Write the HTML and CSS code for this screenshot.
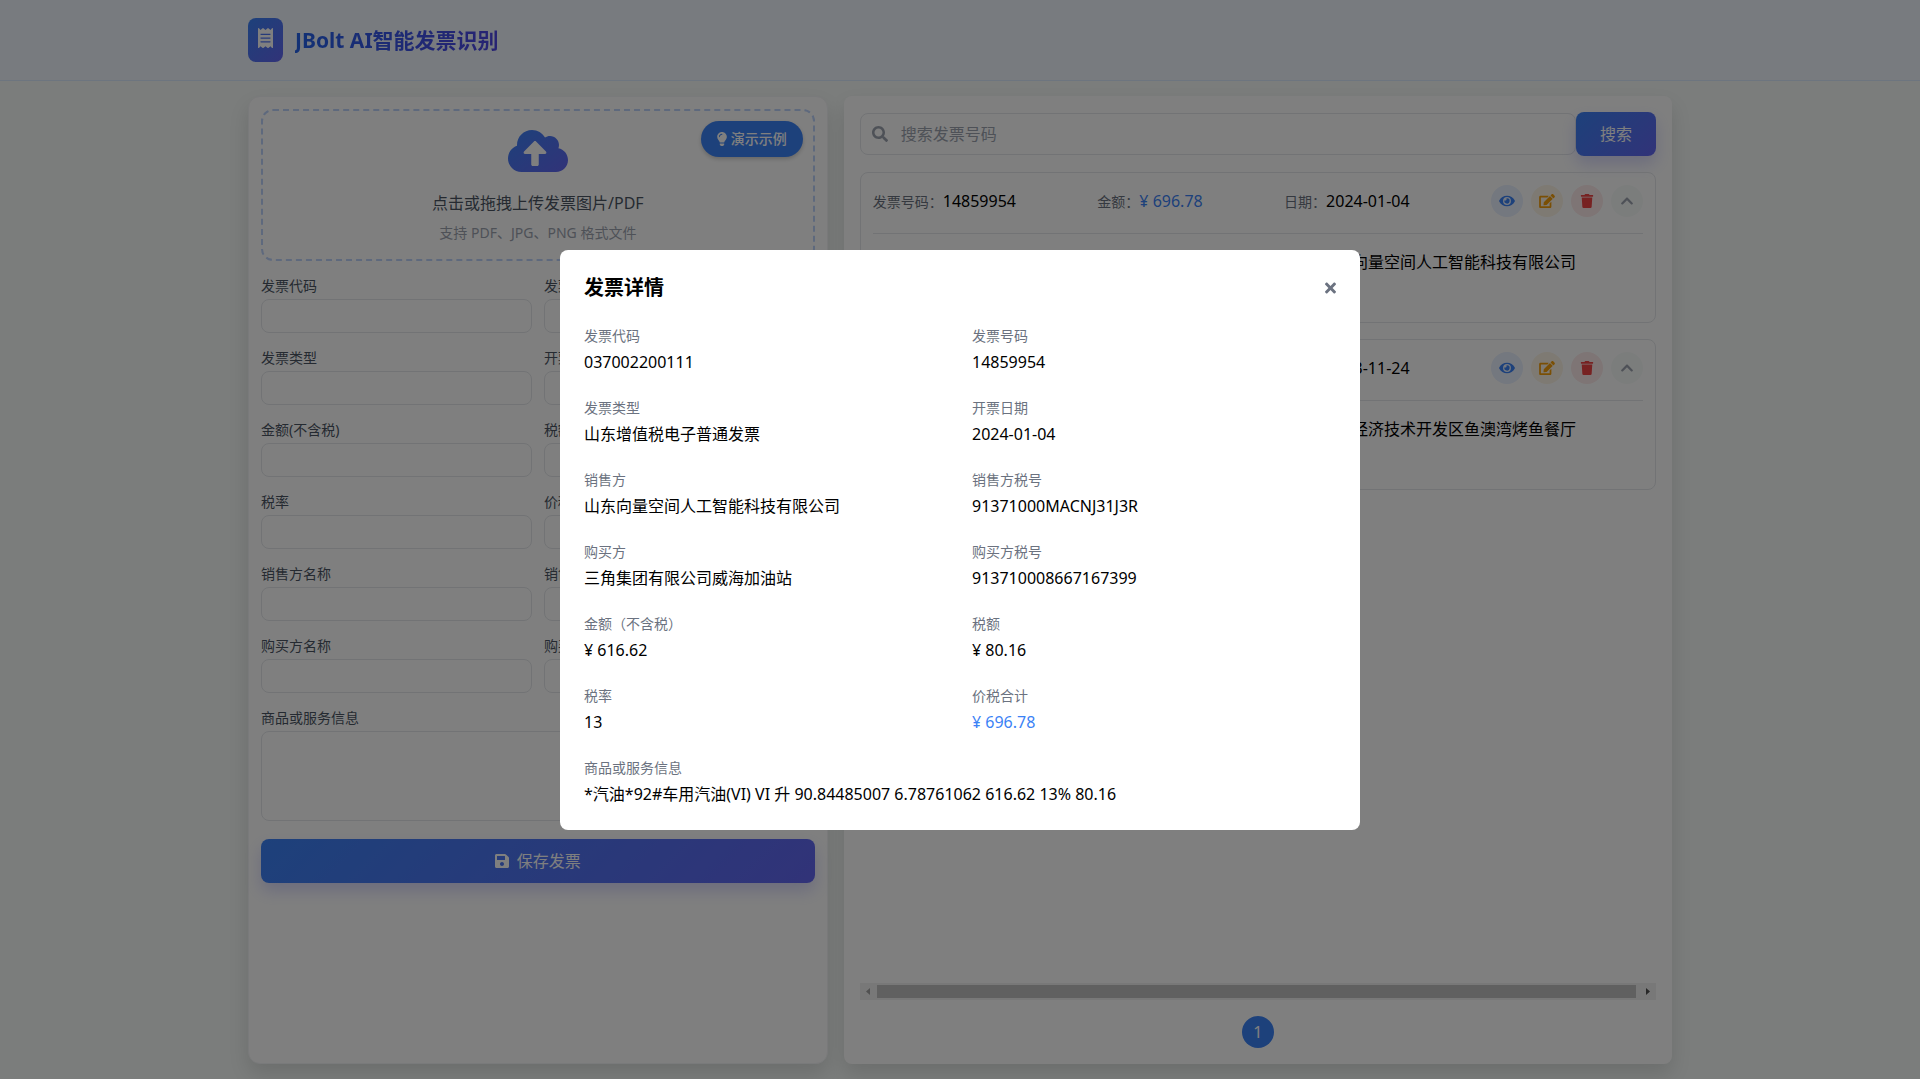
FILE: index.html
```html
<!DOCTYPE html>
<html lang="zh-CN">
<head>
<meta charset="utf-8">
<meta name="viewport" content="width=device-width, initial-scale=1">
<title>JBolt AI智能发票识别</title>
<link rel="stylesheet" href="styles.css">
</head>
<body>
<svg class="sprite" aria-hidden="true">
  <defs>
    <linearGradient id="brand" x1="0" y1="0" x2="1" y2="1"><stop offset="0" stop-color="#3b82f6"/><stop offset="1" stop-color="#6366f1"/></linearGradient>
  </defs>
  <symbol id="i-receipt" viewBox="0 0 384 512"><path d="M358.4 3.2L320 48 265.6 3.2a15.9 15.9 0 0 0-19.2 0L192 48 137.6 3.2a15.9 15.9 0 0 0-19.2 0L64 48 25.6 3.2C15-4.7 0 2.8 0 16v480c0 13.2 15 20.7 25.6 12.8L64 464l54.4 44.8a15.9 15.9 0 0 0 19.2 0L192 464l54.4 44.8a15.9 15.9 0 0 0 19.2 0L320 464l38.4 44.8c10.5 7.9 25.6.4 25.6-12.8V16c0-13.2-15-20.7-25.6-12.8zM320 360c0 4.4-3.6 8-8 8H72c-4.4 0-8-3.6-8-8v-16c0-4.4 3.6-8 8-8h240c4.4 0 8 3.6 8 8v16zm0-96c0 4.4-3.6 8-8 8H72c-4.4 0-8-3.6-8-8v-16c0-4.4 3.6-8 8-8h240c4.4 0 8 3.6 8 8v16zm0-96c0 4.4-3.6 8-8 8H72c-4.4 0-8-3.6-8-8v-16c0-4.4 3.6-8 8-8h240c4.4 0 8 3.6 8 8v16z"/></symbol>
  <symbol id="i-bulb" viewBox="0 0 352 512"><path d="M96.06 454.35c.01 6.29 1.87 12.45 5.36 17.69l17.09 25.69a31.99 31.99 0 0 0 26.64 14.28h61.71a31.99 31.99 0 0 0 26.64-14.28l17.09-25.69a31.989 31.989 0 0 0 5.36-17.69l.04-38.35H96.01l.05 38.35zM0 176c0 44.37 16.45 84.85 43.56 115.78 16.52 18.85 42.36 58.23 52.21 91.45.04.26.07.52.11.78h160.24c.04-.26.07-.51.11-.78 9.85-33.22 35.69-72.6 52.21-91.45C335.55 260.85 352 220.37 352 176 352 78.61 272.91-.3 175.45 0 73.44.31 0 82.97 0 176zm176-80c-44.11 0-80 35.89-80 80 0 8.84-7.16 16-16 16s-16-7.16-16-16c0-61.76 50.24-112 112-112 8.84 0 16 7.16 16 16s-7.16 16-16 16z"/></symbol>
  <symbol id="i-search" viewBox="0 0 512 512"><path d="M505 442.7L405.3 343c-4.5-4.5-10.6-7-17-7H372c27.6-35.3 44-79.7 44-128C416 93.1 322.9 0 208 0S0 93.1 0 208s93.1 208 208 208c48.3 0 92.7-16.4 128-44v16.3c0 6.4 2.5 12.5 7 17l99.7 99.7c9.4 9.4 24.6 9.4 33.9 0l28.3-28.3c9.4-9.4 9.4-24.6.1-34zM208 336c-70.7 0-128-57.2-128-128 0-70.7 57.2-128 128-128 70.7 0 128 57.2 128 128 0 70.7-57.2 128-128 128z"/></symbol>
  <symbol id="i-eye" viewBox="0 0 576 512"><path d="M572.52 241.4C518.29 135.59 410.93 64 288 64S57.68 135.64 3.48 241.41a32.35 32.35 0 0 0 0 29.19C57.71 376.41 165.07 448 288 448s230.32-71.64 284.52-177.41a32.35 32.35 0 0 0 0-29.19zM288 400a144 144 0 1 1 144-144 143.93 143.93 0 0 1-144 144zm0-240a95.31 95.31 0 0 0-25.31 3.79 47.85 47.85 0 0 1-66.9 66.9A95.78 95.78 0 1 0 288 160z"/></symbol>
  <symbol id="i-edit" viewBox="0 0 576 512"><path d="M402.6 83.2l90.2 90.2c3.8 3.8 3.8 10 0 13.8L274.4 405.6l-92.8 10.3c-12.4 1.4-22.9-9.1-21.5-21.5l10.3-92.8L388.8 83.2c3.8-3.8 10-3.8 13.8 0zm162-22.9l-48.8-48.8c-15.2-15.2-39.9-15.2-55.2 0l-35.4 35.4c-3.8 3.8-3.8 10 0 13.8l90.2 90.2c3.8 3.8 10 3.8 13.8 0l35.4-35.4c15.2-15.3 15.2-40 0-55.2zM384 346.2V448H64V128h229.8c3.2 0 6.2-1.3 8.5-3.5l40-40c7.6-7.6 2.2-20.5-8.5-20.5H48C21.5 64 0 85.5 0 112v352c0 26.5 21.5 48 48 48h352c26.5 0 48-21.5 48-48V306.2c0-10.7-12.9-16-20.5-8.5l-40 40c-2.2 2.3-3.5 5.3-3.5 8.5z"/></symbol>
  <symbol id="i-trash" viewBox="0 0 448 512"><path d="M432 32H312l-9.4-18.7A24 24 0 0 0 281.1 0H166.8a23.72 23.72 0 0 0-21.4 13.3L136 32H16A16 16 0 0 0 0 48v32a16 16 0 0 0 16 16h416a16 16 0 0 0 16-16V48a16 16 0 0 0-16-16zM53.2 467a48 48 0 0 0 47.9 45h245.8a48 48 0 0 0 47.9-45L416 128H32z"/></symbol>
  <symbol id="i-up" viewBox="0 0 448 512"><path d="M240.971 130.524l194.343 194.343c9.373 9.373 9.373 24.569 0 33.941l-22.667 22.667c-9.357 9.357-24.522 9.375-33.901.04L224 227.495 69.255 381.516c-9.379 9.335-24.544 9.317-33.901-.04l-22.667-22.667c-9.373-9.373-9.373-24.569 0-33.941L207.03 130.525c9.372-9.373 24.568-9.373 33.941-.001z"/></symbol>
  <symbol id="i-save" viewBox="0 0 448 512"><path d="M433.941 129.941l-83.882-83.882A48 48 0 0 0 316.118 32H48C21.49 32 0 53.49 0 80v352c0 26.51 21.49 48 48 48h352c26.51 0 48-21.49 48-48V163.882a48 48 0 0 0-14.059-33.941zM224 416c-35.346 0-64-28.654-64-64 0-35.346 28.654-64 64-64s64 28.654 64 64c0 35.346-28.654 64-64 64zm96-304.52V212c0 6.627-5.373 12-12 12H76c-6.627 0-12-5.373-12-12V108c0-6.627 5.373-12 12-12h228.52c3.183 0 6.235 1.264 8.485 3.515l3.48 3.48A11.996 11.996 0 0 1 320 111.48z"/></symbol>
  <symbol id="i-times" viewBox="0 0 352 512"><path d="M242.72 256l100.07-100.07c12.28-12.28 12.28-32.19 0-44.48l-22.24-22.24c-12.28-12.28-32.19-12.28-44.48 0L176 189.28 75.93 89.21c-12.28-12.28-32.19-12.28-44.48 0L9.21 111.45c-12.28 12.28-12.28 32.19 0 44.48L109.28 256 9.21 356.07c-12.28 12.28-12.28 32.19 0 44.48l22.24 22.24c12.28 12.28 32.2 12.28 44.48 0L176 322.72l100.07 100.07c12.28 12.28 32.2 12.28 44.48 0l22.24-22.24c12.28-12.28 12.28-32.19 0-44.48L242.72 256z"/></symbol>
</svg>

<div class="page">
  <header class="topbar">
    <div class="container brand">
      <span class="logo"><svg class="icon-receipt"><use href="#i-receipt"/></svg></span>
      <h1 class="brand-title">JBolt AI智能发票识别</h1>
    </div>
  </header>

  <main class="container workspace">
    <section class="panel form-panel">
      <div class="dropzone">
        <svg class="icon-cloud" viewBox="0 0 640 512"><path fill="url(#brand)" d="M537.6 226.6c4.1-10.7 6.4-22.4 6.4-34.6 0-53-43-96-96-96-19.7 0-38.1 6-53.3 16.2C367 64.2 315.3 32 256 32c-88.4 0-160 71.6-160 160 0 2.7.1 5.4.2 8.1C40.2 219.8 0 273.2 0 336c0 79.5 64.5 144 144 144h368c70.7 0 128-57.3 128-128 0-61.9-44-113.6-102.4-125.4zM393.4 288H328v112c0 8.8-7.2 16-16 16h-48c-8.8 0-16-7.2-16-16V288h-65.4c-14.3 0-21.4-17.2-11.3-27.3l105.4-105.4c6.2-6.2 16.4-6.2 22.6 0l105.4 105.4c10.1 10.1 2.9 27.3-11.3 27.3z"/></svg>
        <p class="drop-title">点击或拖拽上传发票图片/PDF</p>
        <p class="drop-hint">支持 PDF、JPG、PNG 格式文件</p>
        <button type="button" class="demo-btn"><svg class="icon-bulb"><use href="#i-bulb"/></svg>演示示例</button>
      </div>
      <form class="invoice-form">
        <div class="field"><label for="code">发票代码</label><input id="code" type="text"></div>
        <div class="field"><label for="number">发票号码</label><input id="number" type="text"></div>
        <div class="field"><label for="type">发票类型</label><input id="type" type="text"></div>
        <div class="field"><label for="date">开票日期</label><input id="date" type="text"></div>
        <div class="field"><label for="amount">金额(不含税)</label><input id="amount" type="text"></div>
        <div class="field"><label for="tax">税额</label><input id="tax" type="text"></div>
        <div class="field"><label for="rate">税率</label><input id="rate" type="text"></div>
        <div class="field"><label for="total">价税合计</label><input id="total" type="text"></div>
        <div class="field"><label for="seller">销售方名称</label><input id="seller" type="text"></div>
        <div class="field"><label for="seller-tax">销售方税号</label><input id="seller-tax" type="text"></div>
        <div class="field"><label for="buyer">购买方名称</label><input id="buyer" type="text"></div>
        <div class="field"><label for="buyer-tax">购买方税号</label><input id="buyer-tax" type="text"></div>
        <div class="field wide"><label for="goods">商品或服务信息</label><textarea id="goods"></textarea></div>
        <button type="submit" class="primary wide save-btn"><svg class="icon-save"><use href="#i-save"/></svg>保存发票</button>
      </form>
    </section>

    <section class="panel list-panel">
      <form class="search-row">
        <label class="search-box"><svg class="icon-search" role="img" aria-label="搜索"><use href="#i-search"/></svg><input type="search" placeholder="搜索发票号码"></label>
        <button type="submit" class="primary search-btn">搜索</button>
      </form>

      <div class="invoice-list">
        <article class="invoice">
          <div class="invoice-head">
            <div><span class="key">发票号码：</span>14859954</div>
            <div><span class="key">金额：</span><span class="money">¥ 696.78</span></div>
            <div><span class="key">日期：</span>2024-01-04</div>
            <div class="actions">
              <button type="button" class="round view" aria-label="查看"><svg class="icon-md"><use href="#i-eye"/></svg></button>
              <button type="button" class="round edit" aria-label="编辑"><svg class="icon-md"><use href="#i-edit"/></svg></button>
              <button type="button" class="round remove" aria-label="删除"><svg class="icon-md"><use href="#i-trash"/></svg></button>
              <button type="button" class="round fold" aria-label="收起"><svg class="icon-md"><use href="#i-up"/></svg></button>
            </div>
          </div>
          <div class="invoice-body">
            <div><span class="key">购买方：</span>三角集团有限公司威海加油站</div>
            <div><span class="key">销售方：</span>山东向量空间人工智能科技有限公司</div>
          </div>
        </article>
        <article class="invoice">
          <div class="invoice-head">
            <div><span class="key">发票号码：</span>14859954</div>
            <div><span class="key">金额：</span><span class="money">¥ 696.78</span></div>
            <div><span class="key">日期：</span>2023-11-24</div>
            <div class="actions">
              <button type="button" class="round view" aria-label="查看"><svg class="icon-md"><use href="#i-eye"/></svg></button>
              <button type="button" class="round edit" aria-label="编辑"><svg class="icon-md"><use href="#i-edit"/></svg></button>
              <button type="button" class="round remove" aria-label="删除"><svg class="icon-md"><use href="#i-trash"/></svg></button>
              <button type="button" class="round fold" aria-label="收起"><svg class="icon-md"><use href="#i-up"/></svg></button>
            </div>
          </div>
          <div class="invoice-body">
            <div><span class="key">购买方：</span>三角集团有限公司</div>
            <div><span class="key">销售方：</span>威海经济技术开发区鱼澳湾烤鱼餐厅</div>
          </div>
        </article>
      </div>

      <div class="scrollbar">
        <svg class="arrow arrow-off" viewBox="0 0 17 17"><path d="M10 5v7L6 8.500z"/></svg>
        <span class="thumb"></span>
        <svg class="arrow" viewBox="0 0 17 17"><path d="M7 5v7l4-3.500z"/></svg>
      </div>
      <nav class="pager"><button type="button" class="page-btn">1</button></nav>
    </section>
  </main>
</div>

<div class="overlay">
  <div class="modal" role="dialog" aria-modal="true" aria-labelledby="detail-title">
    <div class="modal-head">
      <h2 id="detail-title" class="modal-title">发票详情</h2>
      <button type="button" class="close-btn" aria-label="关闭"><svg class="icon-times"><use href="#i-times"/></svg></button>
    </div>
    <dl class="details">
      <div><dt>发票代码</dt><dd>037002200111</dd></div>
      <div><dt>发票号码</dt><dd>14859954</dd></div>
      <div><dt>发票类型</dt><dd>山东增值税电子普通发票</dd></div>
      <div><dt>开票日期</dt><dd>2024-01-04</dd></div>
      <div><dt>销售方</dt><dd>山东向量空间人工智能科技有限公司</dd></div>
      <div><dt>销售方税号</dt><dd>91371000MACNJ31J3R</dd></div>
      <div><dt>购买方</dt><dd>三角集团有限公司威海加油站</dd></div>
      <div><dt>购买方税号</dt><dd>913710008667167399</dd></div>
      <div><dt>金额（不含税）</dt><dd>¥ 616.62</dd></div>
      <div><dt>税额</dt><dd>¥ 80.16</dd></div>
      <div><dt>税率</dt><dd>13</dd></div>
      <div><dt>价税合计</dt><dd class="money">¥ 696.78</dd></div>
      <div class="wide"><dt>商品或服务信息</dt><dd>*汽油*92#车用汽油(VI) VI 升 90.84485007 6.78761062 616.62 13% 80.16</dd></div>
    </dl>
  </div>
</div>
</body>
</html>
```
FILE: styles.css
```css
* { box-sizing: border-box; }

body,
h1,
h2,
p,
dl,
dd { margin: 0; }

body {
  background: #f6faf8;
  color: #000;
  font: 16px/24px "Noto Sans", "Noto Sans CJK SC", sans-serif;
}

button,
input,
textarea { font: inherit; }

button {
  padding: 0;
  border: 0;
  cursor: pointer;
}

svg { display: block; fill: currentColor; }

.sprite { position: absolute; width: 0; height: 0; }

.page {
  display: flex;
  flex-direction: column;
  min-height: 100vh;
}

.container {
  width: 100%;
  max-width: 1424px;
  margin: 0 auto;
}

/* header */
.topbar {
  padding: 18px 0;
  border-bottom: 1px solid #dbeafe;
  background: #f0f7ff;
}

.brand { display: flex; align-items: center; gap: 12px; }

.logo {
  padding: 10px 10px 14px;
  border-radius: 8px;
  background: linear-gradient(135deg, #3b82f6, #6366f1);
  color: #fff;
}

.icon-receipt { width: 15px; height: 20px; }

.brand-title {
  background: linear-gradient(90deg, #2563eb, #4f46e5);
  background-clip: text;
  color: transparent;
  font-size: 21px;
  line-height: 28px;
}

/* two-column workspace */
.workspace {
  display: grid;
  flex: 1;
  grid-template-columns: 7fr 10fr;
  gap: 16px;
  padding: 15px 0;
}

.panel {
  min-width: 0;
  background: #fff;
  box-shadow: 0 10px 20px rgba(0, 0, 0, .12);
}

.form-panel {
  padding: 12px;
  border: 1px solid #f3f4f6;
  border-radius: 12px;
}

.dropzone {
  position: relative;
  display: flex;
  flex-direction: column;
  align-items: center;
  padding: 16px;
  border: 2px dashed #bcd2fb;
  border-radius: 12px;
}

.icon-cloud { width: 60px; height: 48px; }
.drop-title { margin-top: 16px; color: #4b5563; }
.drop-hint { margin-top: 8px; color: #9ca3af; font-size: 14px; line-height: 20px; }

.demo-btn {
  position: absolute;
  top: 10px;
  right: 10px;
  display: flex;
  align-items: center;
  gap: 4px;
  padding: 8px 16px;
  border-radius: 18px;
  background: #3b82f6;
  box-shadow: 0 2px 4px rgba(0, 0, 0, .2);
  color: #fff;
  font-size: 14px;
  font-weight: 500;
  line-height: 20px;
}

.icon-bulb { width: 10px; height: 14px; }

.invoice-form {
  display: grid;
  grid-template-columns: 1fr 1fr;
  gap: 15px 12px;
  margin-top: 15px;
}

.wide { grid-column: 1 / -1; }

.field { display: flex; flex-direction: column; gap: 3px; }
.field label { color: #4b5563; font-size: 14px; line-height: 20px; }

.field input,
.field textarea {
  width: 100%;
  height: 34px;
  padding: 4px 12px;
  border: 1px solid #e5e7eb;
  border-radius: 8px;
  background: #fff;
}

.field textarea { height: 90px; resize: none; }

.primary {
  height: 44px;
  border-radius: 8px;
  background: linear-gradient(135deg, #3b82f6, #6366f1);
  box-shadow: 0 8px 16px rgba(99, 102, 241, .25);
  color: #fff;
}

.save-btn {
  display: flex;
  align-items: center;
  justify-content: center;
  gap: 8px;
  margin-top: 3px;
}

.icon-save { width: 14px; height: 16px; }

/* invoice list */
.list-panel {
  display: flex;
  flex-direction: column;
  padding: 16px;
  border-radius: 8px;
}

.search-row { display: flex; align-items: center; }

.search-box {
  display: flex;
  flex: 1;
  align-items: center;
  gap: 13px;
  height: 42px;
  padding: 0 11px;
  border: 1px solid #e5e7eb;
  border-radius: 8px;
  color: #9ca3af;
}

.search-box input {
  flex: 1;
  min-width: 0;
  padding: 0;
  border: 0;
  background: none;
}

.search-box input::placeholder { color: #9ca3af; }
.icon-search { width: 16px; height: 16px; }
.search-btn { width: 80px; }

.invoice-list {
  display: flex;
  flex: 1;
  flex-direction: column;
  gap: 16px;
  margin-top: 16px;
}

.invoice {
  padding: 12px;
  border: 1px solid #e5e7eb;
  border-radius: 8px;
}

.invoice-head {
  display: flex;
  align-items: center;
  justify-content: space-between;
  padding-bottom: 16px;
  border-bottom: 1px solid #e5e7eb;
}

.invoice-body {
  display: grid;
  grid-template-columns: 1fr 1fr;
  gap: 12px;
  min-height: 76px;
  padding-top: 16px;
}

.key { color: #6b7280; font-size: 14px; }
.money { color: #3b82f6; }

.actions { display: flex; gap: 8px; }

.round {
  display: grid;
  place-items: center;
  width: 32px;
  height: 32px;
  border-radius: 50%;
}

.icon-md { width: 16px; height: 14px; }
.view { background: #e8f0fe; color: #3b82f6; }
.edit { background: #fdf5e6; color: #f59e0b; }
.remove { background: #fdeaea; color: #ef4444; }
.fold { background: #f7faf9; color: #9ca3af; }

.scrollbar {
  display: flex;
  align-items: center;
  height: 17px;
  background: #f1f1f1;
}

.arrow { width: 17px; height: 17px; color: #505050; }
.arrow-off { color: #a3a3a3; }
.thumb { flex: 1; height: 13px; margin-right: 3px; background: #c1c1c1; }

.pager { display: flex; justify-content: center; margin-top: 16px; }

.page-btn {
  width: 32px;
  height: 32px;
  border-radius: 50%;
  background: #3b82f6;
  color: #fff;
}

/* detail dialog */
.overlay {
  position: fixed;
  inset: 0;
  display: flex;
  align-items: center;
  justify-content: center;
  background: rgba(0, 0, 0, .5);
}

.modal {
  width: 100%;
  max-width: 800px;
  padding: 24px;
  border-radius: 8px;
  background: #fff;
}

.modal-head {
  display: flex;
  align-items: center;
  justify-content: space-between;
  margin-bottom: 24px;
}

.modal-title { font-size: 20px; line-height: 28px; }

.close-btn { background: none; color: #6b7280; }
.icon-times { width: 11px; height: 16px; }

.details {
  display: grid;
  grid-template-columns: 1fr 1fr;
  gap: 24px;
}

.details dt {
  margin-bottom: 4px;
  color: #6b7280;
  font-size: 14px;
  line-height: 20px;
}
```
